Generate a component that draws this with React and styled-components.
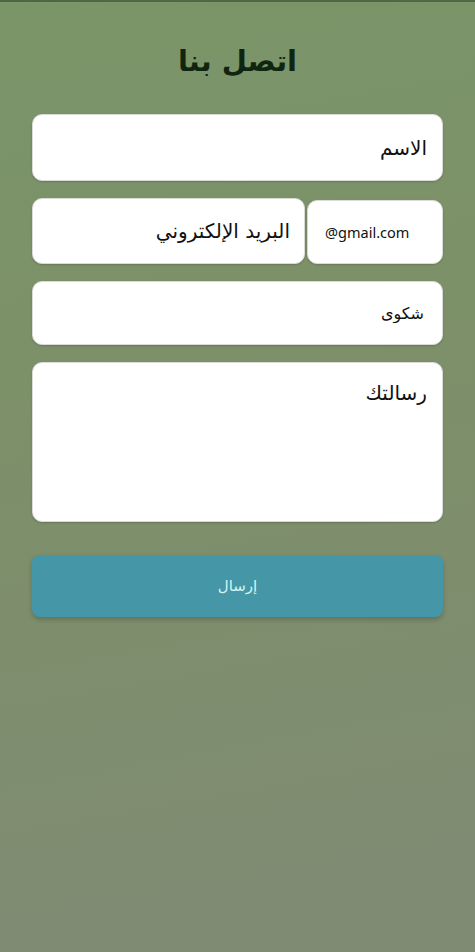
import React from "react";
import styled, { createGlobalStyle } from "styled-components";

const Global = createGlobalStyle`
  html, body { margin: 0; padding: 0; }
  body { font-family: "DejaVu Sans", "Noto Sans", sans-serif; }
  * { box-sizing: border-box; }
`;

const Page = styled.div`
  min-height: 952px;
  border-top: 2px solid #4e6843;
  background: linear-gradient(170deg, #7a9568 0%, #7d9069 40%, #808b74 100%);
  padding: 0 32px;
  direction: rtl;
`;

const Title = styled.h1`
  margin: 0;
  height: 112px;
  padding-top: 37px;
  text-align: center;
  font-family: "DejaVu Sans", sans-serif;
  font-weight: bold;
  font-size: 29px;
  line-height: 44px;
  color: #102510;
`;

const Form = styled.form`
  display: flex;
  flex-direction: column;
  gap: 17px;
`;

const Row = styled.div`
  display: flex;
  gap: 2px;
  align-items: flex-end;
`;

const fieldBase = `
  display: block;
  width: 100%;
  background: #ffffff;
  border: 1px solid #d9dcd6;
  border-radius: 10px;
  box-shadow: 0 1px 2px rgba(0, 0, 0, 0.18);
  outline: none;
  color: #111;
  font-family: "DejaVu Sans", sans-serif;
  direction: rtl;
  text-align: right;
  &::placeholder { color: #111; opacity: 1; }
`;

const Input = styled.input`
  ${fieldBase}
  height: ${(p) => p.$h}px;
  font-size: ${(p) => p.$size}px;
  padding: 0 ${(p) => p.$pad}px 0 12px;
  flex: ${(p) => (p.$grow ? "1 1 auto" : "none")};
`;

const Suffix = styled.div`
  flex: 0 0 136px;
  height: 64px;
  background: #ffffff;
  border: 1px solid #d9dcd6;
  border-radius: 10px;
  box-shadow: 0 1px 2px rgba(0, 0, 0, 0.18);
  display: flex;
  align-items: center;
  justify-content: flex-start;
  direction: ltr;
  padding-left: 17px;
  font-family: "Noto Sans", "DejaVu Sans", sans-serif;
  font-size: 14.5px;
  color: #111;
`;

const TextArea = styled.textarea`
  ${fieldBase}
  height: 160px;
  resize: none;
  font-size: 20px;
  line-height: 28px;
  padding: 16px 15px 10px 12px;
`;

const Button = styled.button`
  margin-top: 16px;
  height: 62px;
  width: 100%;
  border: none;
  border-radius: 8px;
  background: #4596a6;
  box-shadow: 0 3px 5px rgba(0, 0, 0, 0.2);
  color: #d2f6f3;
  font-family: "DejaVu Sans", sans-serif;
  font-size: 15px;
  cursor: pointer;
`;

export default function App() {
  return (
    <>
      <Global />
      <Page>
        <Title>اتصل بنا</Title>
        <Form onSubmit={(e) => e.preventDefault()}>
          <Input $h={67} $size={20} $pad={15} placeholder="الاسم" />
          <Row>
            <Suffix>@gmail.com</Suffix>
            <Input $grow $h={66} $size={20} $pad={14} placeholder="البريد الإلكتروني" />
          </Row>
          <Input $h={64} $size={16} $pad={18} placeholder="شكوى" />
          <TextArea placeholder="رسالتك" />
          <Button type="submit">إرسال</Button>
        </Form>
      </Page>
    </>
  );
}
